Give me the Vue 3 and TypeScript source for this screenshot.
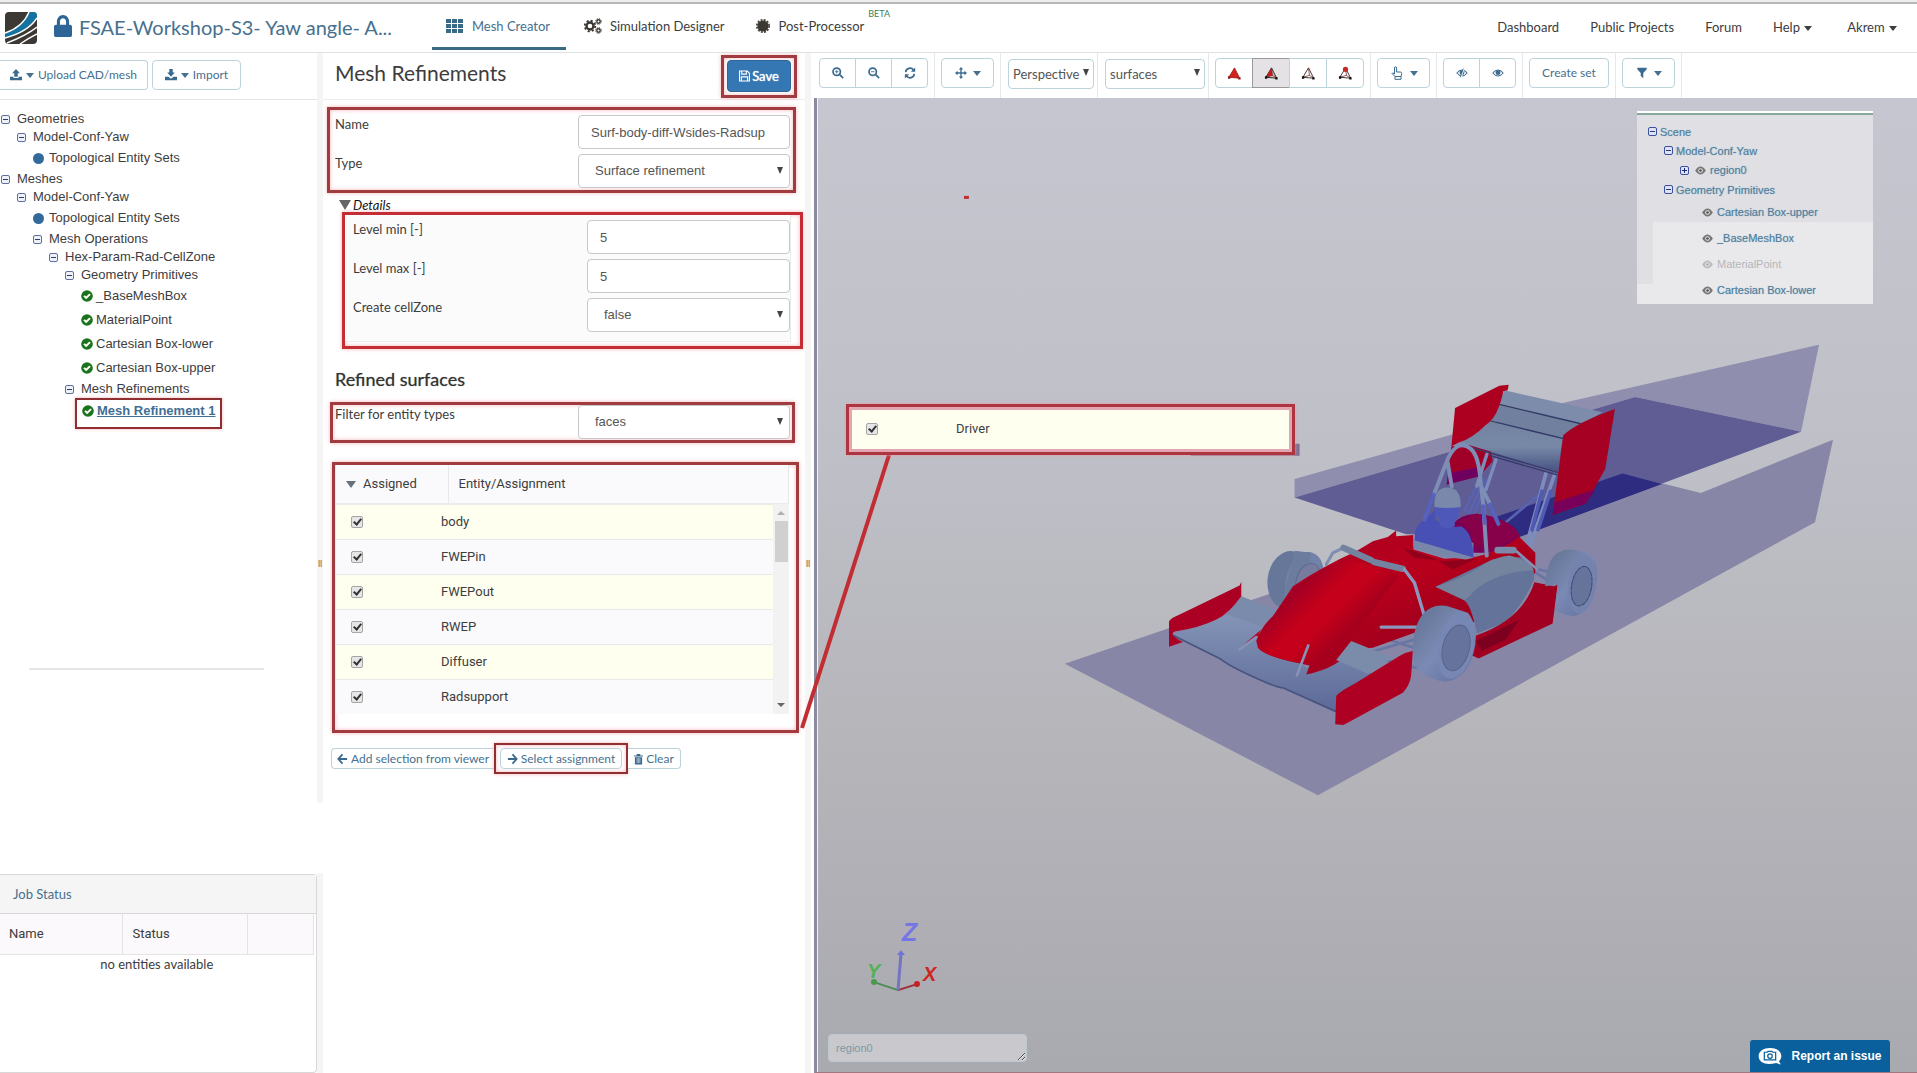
<script setup lang="ts">
import { ref } from 'vue'

type NodeKind = 'folder' | 'set' | 'ok' | 'active'
interface TreeNode { label: string; depth: number; kind: NodeKind }
interface SceneNode { label: string; depth: number; kind: 'open' | 'closed' | 'leaf'; dim?: boolean }

const tree: TreeNode[] = [
  { label: 'Geometries', depth: 0, kind: 'folder' },
  { label: 'Model-Conf-Yaw', depth: 1, kind: 'folder' },
  { label: 'Topological Entity Sets', depth: 2, kind: 'set' },
  { label: 'Meshes', depth: 0, kind: 'folder' },
  { label: 'Model-Conf-Yaw', depth: 1, kind: 'folder' },
  { label: 'Topological Entity Sets', depth: 2, kind: 'set' },
  { label: 'Mesh Operations', depth: 2, kind: 'folder' },
  { label: 'Hex-Param-Rad-CellZone', depth: 3, kind: 'folder' },
  { label: 'Geometry Primitives', depth: 4, kind: 'folder' },
  { label: '_BaseMeshBox', depth: 5, kind: 'ok' },
  { label: 'MaterialPoint', depth: 5, kind: 'ok' },
  { label: 'Cartesian Box-lower', depth: 5, kind: 'ok' },
  { label: 'Cartesian Box-upper', depth: 5, kind: 'ok' },
  { label: 'Mesh Refinements', depth: 4, kind: 'folder' },
  { label: 'Mesh Refinement 1', depth: 5, kind: 'active' },
]

const scene: SceneNode[] = [
  { label: 'Scene', depth: 0, kind: 'open' },
  { label: 'Model-Conf-Yaw', depth: 1, kind: 'open' },
  { label: 'region0', depth: 2, kind: 'closed' },
  { label: 'Geometry Primitives', depth: 1, kind: 'open' },
  { label: 'Cartesian Box-upper', depth: 3, kind: 'leaf' },
  { label: '_BaseMeshBox', depth: 3, kind: 'leaf' },
  { label: 'MaterialPoint', depth: 3, kind: 'leaf', dim: true },
  { label: 'Cartesian Box-lower', depth: 3, kind: 'leaf' },
]

const entities = ref(['body', 'FWEPin', 'FWEPout', 'RWEP', 'Diffuser', 'Radsupport'].map(name => ({ name, on: true })))
const driverOn = ref(true)
const name = ref('Surf-body-diff-Wsides-Radsup')
const levelMin = ref('5')
const levelMax = ref('5')
const region = ref('region0')
const renderModes = ['solid', 'edged', 'wire', 'points']
const activeMode = ref('edged')
</script>

<template>
  <div class="page">
    <header class="topbar">
      <svg class="logo" viewBox="0 0 32 32">
        <rect width="32" height="32" rx="4" fill="#3c3834" />
        <path d="M24 0h4q4 0 4 4v2Q23 20 0 26v-5Q18 15 24 0Z" fill="#15719f" />
        <path d="M24 0Q18 15 0 21M32 6Q23 20 0 26M32 15Q22 23 2 31M32 22Q24 26 15 32" fill="none" stroke="#fff" stroke-width="1.4" />
      </svg>
      <svg class="lock" viewBox="0 0 448 512" preserveAspectRatio="none"><path fill="#2e6596" d="M400 224h-24v-72C376 68 308 0 224 0S72 68 72 152v72H48c-26 0-48 22-48 48v192c0 26 22 48 48 48h352c26 0 48-22 48-48V272c0-26-22-48-48-48zM300 224H148v-72c0-40 34-76 76-76s76 36 76 76v72z" /></svg>
      <h1 class="project">FSAE-Workshop-S3- Yaw angle- A...</h1>
      <nav class="tabs">
        <a href="#mesh" class="tab current">
          <svg class="tab-icon" viewBox="0 0 18 14"><path fill="#3b6a87" d="M0 0h5v4H0zM6 0h5v4H6zM12 0h5v4h-5zM0 5h5v4H0zM6 5h5v4H6zM12 5h5v4h-5zM0 10h5v4H0zM6 10h5v4H6zM12 10h5v4h-5z" /></svg>
          Mesh Creator
        </a>
        <a href="#simulation" class="tab">
          <svg class="tab-icon" viewBox="0 0 18 16" fill="none" stroke="#3b3733">
            <circle cx="6" cy="8" r="3.5" stroke-width="2.4" /><circle cx="6" cy="8" r="5.3" stroke-width="1.8" stroke-dasharray="2.1 2.06" />
            <circle cx="14.5" cy="3.5" r="1.7" stroke-width="1.4" /><circle cx="14.5" cy="3.5" r="2.8" stroke-dasharray="1.2 1" />
            <circle cx="14.5" cy="12.5" r="1.7" stroke-width="1.4" /><circle cx="14.5" cy="12.5" r="2.8" stroke-dasharray="1.2 1" />
          </svg>
          Simulation Designer
        </a>
        <a href="#post" class="tab">
          <svg class="tab-icon small" viewBox="0 0 14 14"><circle cx="7" cy="7" r="5.6" fill="#3b3733" /><circle cx="7" cy="7" r="6.2" fill="none" stroke="#3b3733" stroke-width="1.6" stroke-dasharray="1.9 1.35" /></svg>
          Post-Processor<sup class="beta">BETA</sup>
        </a>
      </nav>
      <nav class="links">
        <a href="#dashboard">Dashboard</a>
        <a href="#projects">Public Projects</a>
        <a href="#forum">Forum</a>
        <a href="#help">Help <i class="caret"></i></a>
        <a href="#user">Akrem <i class="caret"></i></a>
      </nav>
    </header>

    <div class="workspace">
      <aside class="sidebar">
        <div class="side-tools">
          <button type="button" class="btn upload">
            <svg class="ico" viewBox="0 0 14 14"><path d="M7 0l4.500 5H9v4H5V5H2.500zM0 9h4v1.500h6V9h4v4H0z" /></svg><i class="caret"></i>Upload CAD/mesh
          </button>
          <button type="button" class="btn">
            <svg class="ico" viewBox="0 0 14 14"><path d="M5 0h4v4h2.500L7 9 2.500 4H5zM0 9h4l3 2.500L10 9h4v4H0z" /></svg><i class="caret"></i>Import
          </button>
        </div>
        <ul class="tree">
          <li v-for="(n, i) in tree" :key="i" :class="[n.kind, 'd' + n.depth]">
            <span v-if="n.kind === 'folder'" class="toggle"></span>
            <span v-else-if="n.kind === 'set'" class="dot"></span>
            <svg v-else class="ok-icon" viewBox="0 0 512 512"><circle cx="256" cy="256" r="248" fill="#1b741b" /><path d="M130 250l90 90 165-165" fill="none" stroke="#fff" stroke-width="84" /></svg>
            <a v-if="n.kind === 'active'" href="#refinement">{{ n.label }}</a>
            <span v-else>{{ n.label }}</span>
          </li>
        </ul>
        <hr class="rule">
        <section class="jobs">
          <h2>Job Status</h2>
          <table>
            <thead><tr><th class="c1">Name</th><th class="c2">Status</th><th></th></tr></thead>
            <tbody><tr><td colspan="3">no entities available</td></tr></tbody>
          </table>
        </section>
      </aside>

      <div class="gutter split"><span class="grip">||</span></div>

      <main class="editor">
        <div class="editor-head">
          <h2>Mesh Refinements</h2>
          <div class="mark save-mark">
            <button type="button" class="save">
              <svg viewBox="0 0 12 12"><path d="M.6.6H9l2.400 2.400v8.400H.6zM3 .6V4h5V.6M2.600 11.400V7h6.800v4.400" fill="none" stroke="#fff" stroke-width="1.2" /></svg>Save
            </button>
          </div>
        </div>

        <div class="mark basics">
          <div class="field"><label for="f-name">Name</label><input id="f-name" v-model="name" type="text"></div>
          <div class="field"><label for="f-type">Type</label><span class="pick"><select id="f-type"><option>Surface refinement</option></select></span></div>
        </div>

        <div class="details-title"><i class="down"></i><em>Details</em></div>
        <div class="mark details">
          <div class="details-box">
            <div class="field"><label for="f-min">Level min [-]</label><input id="f-min" v-model="levelMin" type="text"></div>
            <div class="field"><label for="f-max">Level max [-]</label><input id="f-max" v-model="levelMax" type="text"></div>
            <div class="field"><label for="f-zone">Create cellZone</label><span class="pick"><select id="f-zone"><option>false</option></select></span></div>
          </div>
        </div>

        <h3>Refined surfaces</h3>
        <div class="mark filter">
          <div class="field"><label for="f-filter">Filter for entity types</label><span class="pick"><select id="f-filter"><option>faces</option></select></span></div>
        </div>

        <div class="mark assign">
          <table>
            <thead><tr><th class="a1"><i class="sort"></i>Assigned</th><th>Entity/Assignment</th></tr></thead>
            <tbody>
              <tr v-for="(e, i) in entities" :key="e.name">
                <td class="a1"><input :id="'e' + i" v-model="e.on" type="checkbox"></td>
                <td><label :for="'e' + i">{{ e.name }}</label></td>
              </tr>
            </tbody>
          </table>
          <div class="scroll"><i class="up"></i><span class="thumb"></span><i class="dn"></i></div>
        </div>

        <div class="actions">
          <button type="button" class="btn mini first"><svg class="ico" viewBox="0 0 12 12"><path d="M6 1L1.500 6 6 11M2 6h9" class="line" /></svg>Add selection from viewer</button>
          <div class="mark pick-mark"><button type="button" class="btn mini"><svg class="ico" viewBox="0 0 12 12"><path d="M6 1l4.500 5L6 11M10 6H1" class="line" /></svg>Select assignment</button></div>
          <button type="button" class="btn mini last"><svg class="ico slim" viewBox="0 0 10 12"><path d="M0 2h3V.5h4V2h3v1.200H0zM1 4h8v8H1z" /><path d="M3.500 5v5.500M5 5v5.500M6.500 5v5.500" stroke="#fff" stroke-width=".6" /></svg>Clear</button>
        </div>
      </main>

      <div class="gutter"><span class="grip">||</span></div>

      <section class="viewer">
        <div class="viewer-tools">
          <div class="cell"><div class="group">
            <button type="button" class="btn sq" aria-label="Zoom in"><svg class="ico" viewBox="0 0 14 14"><circle cx="5.5" cy="5.5" r="4.3" class="line" /><path d="M9 9l4 4" class="line" /><path d="M3.500 5.500h4M5.500 3.500v4" class="line thin" /></svg></button>
            <button type="button" class="btn sq" aria-label="Zoom out"><svg class="ico" viewBox="0 0 14 14"><circle cx="5.5" cy="5.5" r="4.3" class="line" /><path d="M9 9l4 4" class="line" /><path d="M3.500 5.500h4" class="line thin" /></svg></button>
            <button type="button" class="btn sq" aria-label="Reset view"><svg class="ico" viewBox="0 0 14 14"><path d="M2 6a5 5 0 0 1 9-2.500M12 8a5 5 0 0 1-9 2.500" class="line" /><path d="M13 .5v5H8zM1 13.500v-5h5z" /></svg></button>
          </div></div>
          <div class="cell"><button type="button" class="btn w-move" aria-label="Move"><svg class="ico" viewBox="0 0 14 14"><path d="M7 0l2.500 3H7.800v3.200H11V4.500L14 7l-3 2.500V7.800H7.800V11h1.700L7 14l-2.500-3h1.700V7.800H3v1.700L0 7l3-2.500v1.700h3.200V3H4.500z" /></svg><i class="caret"></i></button></div>
          <div class="cell tight"><span class="pick w-view"><select aria-label="Projection"><option>Perspective</option></select></span></div>
          <div class="cell tight"><span class="pick w-surf"><select aria-label="Entity type"><option>surfaces</option></select></span></div>
          <div class="cell"><div class="group modes">
            <button v-for="m in renderModes" :key="m" type="button" class="btn sq" :class="{ pressed: m === activeMode }" :aria-label="m" @click="activeMode = m">
              <svg class="tri" viewBox="0 0 16 16">
                <path v-if="m === 'solid'" d="M8 2l5.500 11L2 12z" fill="#d3201c" stroke="#a5211d" />
                <path v-else-if="m === 'edged'" d="M8 2l5.500 11L2 12z" fill="#e3c3c2" stroke="#222" />
                <path v-else d="M8 2l5.500 11L2 12z" fill="#fff" stroke="#333" />
                <path v-if="m === 'edged'" d="M8 2L9 10 2 12z" fill="#c11f1b" />
                <path v-if="m !== 'solid'" d="M8 2L9 10l4.500 3M9 10l-7 2" fill="none" stroke="#7a2420" stroke-width=".8" />
                <path d="M1 11h2.500v2.500H1zM12 12h2.500v2.500H12z" :fill="m === 'solid' ? '#8d1c18' : '#111'" />
                <circle v-if="m === 'points'" cx="8" cy="3.5" r="2.8" fill="#c62a26" />
              </svg>
            </button>
          </div></div>
          <div class="cell"><button type="button" class="btn w-pick" aria-label="Pick"><svg class="ico hand" viewBox="0 0 14 14"><path d="M4.500 8V2q0-1.300 1-1.300T6.600 2v4h3.700q1.400 0 1.400 1.500L11 10.500H5L2 7.500q0-1.500 2.500.5ZM5 10.500h6v2.800H5z" fill="none" stroke="#3b6a8f" /></svg><i class="caret"></i></button></div>
          <div class="cell"><div class="group">
            <button type="button" class="btn sq" aria-label="Hide"><svg class="ico" viewBox="0 0 14 14"><path d="M1 7q6-7 12 0-6 7-12 0Z" fill="none" stroke="#3b6a8f" stroke-width="1.2" /><circle cx="7" cy="6.6" r="2.8" /><path d="M9.500 1.500l-4 11" stroke="#fff" stroke-width="1.5" /><path d="M8.500 2l-3.500 10" class="line thin" /></svg></button>
            <button type="button" class="btn sq" aria-label="Show"><svg class="ico" viewBox="0 0 14 14"><path d="M1 7q6-7 12 0-6 7-12 0Z" fill="none" stroke="#3b6a8f" stroke-width="1.2" /><circle cx="7" cy="6.6" r="2.8" /></svg></button>
          </div></div>
          <div class="cell"><button type="button" class="btn w-create">Create set</button></div>
          <div class="cell"><button type="button" class="btn w-filter" aria-label="Filter"><svg class="ico" viewBox="0 0 14 14"><path d="M1.500 1h11v1.500L8.500 7v6L5.500 10.500V7l-4-4.500z" /></svg><i class="caret"></i></button></div>
        </div>

        <div class="canvas">
          <svg class="model" viewBox="818 98 1099 975" preserveAspectRatio="xMidYMin meet">
            <defs>
              <linearGradient id="red" x1="0" y1="0" x2="1" y2="1"><stop offset="0" stop-color="#a80026" /><stop offset=".45" stop-color="#b8001c" /><stop offset=".6" stop-color="#a6001d" /><stop offset="1" stop-color="#96001f" /></linearGradient>
              <linearGradient id="nose" gradientUnits="userSpaceOnUse" x1="760" y1="760" x2="900" y2="900"><stop offset="0" stop-color="#a20024" /><stop offset=".4" stop-color="#c4001a" /><stop offset=".65" stop-color="#c4001a" /><stop offset="1" stop-color="#a6001d" /></linearGradient>
              <linearGradient id="steel" x1="0" y1="0" x2="0" y2="1"><stop offset="0" stop-color="#8494b6" /><stop offset="1" stop-color="#5c6998" /></linearGradient>
              <linearGradient id="wing" x1="0" y1="0" x2="0" y2="1"><stop offset="0" stop-color="#72829f" /><stop offset=".5" stop-color="#7889a8" /><stop offset="1" stop-color="#465382" /></linearGradient>
              <linearGradient id="tyre" x1="0" y1="0" x2="1" y2="1"><stop offset="0" stop-color="#61718f" /><stop offset=".5" stop-color="#7a8ab4" /><stop offset="1" stop-color="#5f6b99" /></linearGradient>
            </defs>
            <rect x="964" y="196" width="5" height="3" fill="#c32d31" />
            <path d="M1191 454L1240 450 1290 449V444H1300V456H1191Z" fill="#7c6f92" />
            <g transform="translate(1040 340) scale(.33333)" stroke-linejoin="round" stroke-linecap="round">
              <path d="M75 973L1750 402 1985 460 2382 300 2328 548 835 1368Z" fill="#8886a6" />
              <path d="M765 418L1580 188 2340 15 2286 276 1788 172 765 474Z" fill="#8f8eae" />
              <path d="M765 474L1788 172 2286 276 1440 592 1100 584Z" fill="#5f5d94" />
              <path d="M1250 573L1750 402 1868 433 1440 592Z" fill="#2e2c80" />
              <g transform="translate(1050 -30)">
                <path d="M186 350L172 465 270 440 310 395 300 340Z" fill="#a00028" />
                <path d="M177 430L270 412 268 440 172 465Z" fill="#700060" />
                <g fill="none" stroke="#5863b4" stroke-width="8">
                  <path d="M275 440L225 545M285 450L240 550M300 440L255 550M455 490L345 582" />
                  <path d="M470 430L408 660M495 437L418 660" stroke="#7c8dbb" stroke-width="11" />
                  <path d="M458 485L428 600M484 485L446 600" stroke="#4f5ab4" stroke-width="11" />
                  <path d="M293 372L262 470M320 390L290 480" stroke="#7c8dbb" stroke-width="10" />
                </g>
                <path d="M210 338Q270 310 300 275L520 328 505 425Z" fill="url(#wing)" />
                <path d="M325 225L578 284 520 325 300 271Z" fill="#71809f" />
                <path d="M345 182L640 248 580 282 327 221Z" fill="#7c8caa" />
                <path d="M325 223L578 283M300 273L520 326M215 345L505 428M300 377L503 436" stroke="#333c67" stroke-width="4" />
                <path d="M197 235L330 168 358 165 355 182 342 185Q325 265 290 285 250 325 210 338L186 350Z" fill="#ad0021" />
                <path d="M522 317Q560 280 677 238L648 418 590 522 490 556Z" fill="#a60022" />
                <path d="M496 518L618 480 590 522 490 556Z" fill="#780058" />
              </g>
              <ellipse cx="748" cy="722" rx="64" ry="88" transform="rotate(8 748 722)" fill="#66779a" />
              <ellipse cx="795" cy="724" rx="56" ry="88" transform="rotate(14 795 724)" fill="#7181a8" />
              <path d="M765 634L815 640 780 810 725 808Z" fill="#6b7c9f" />
              <ellipse cx="805" cy="722" rx="34" ry="52" transform="rotate(20 805 722)" fill="#777c9f" stroke="#5c678d" stroke-width="3" />
              <path d="M605 770L720 815 650 865 562 826Z" fill="#7a8bac" />
              <path d="M395 885Q480 865 562 826L690 870 650 905 800 985 890 960 1000 1003 890 1070V1118L730 1045Q700 1042 640 1012L570 975 540 957Z" fill="url(#steel)" />
              <path d="M395 885L540 957Q565 978 640 1012T730 1045L888 1116" fill="none" stroke="#46547f" stroke-width="5" />
              <path d="M388 845Q395 835 420 825L600 738 605 727V770Q570 820 530 840 480 865 405 876 385 885 430 908L388 922Z" fill="#ab0024" />
              <path d="M1005 935L1125 900M1045 900L1140 930M1030 960L1130 985M1125 840L1180 860M1500 690L1540 700M1490 700L1530 725" stroke="#6876a5" stroke-width="8" />
              <path d="M1240 555Q1270 515 1330 525 1430 545 1440 592L1448 640H1240Z" fill="#7a0055" />
              <path d="M595 932L655 888 700 840 625 905ZM650 905Q655 875 700 830L760 740Q850 680 950 635L1000 605 1045 592 1070 573V590L1122 586V630L1215 658 1310 652Q1380 635 1440 592L1488 640V700L1300 850 1125 880 1000 925 930 930Q900 985 800 1005L810 978Q680 955 655 925Z" fill="url(#red)" />
              <path d="M655 905Q655 875 700 830L765 742Q850 685 920 655L1080 710Q1000 800 900 960L810 975Q680 955 655 925Z" fill="url(#nose)" />
              <path d="M1090 625L1125 655 1215 665 1310 658 1240 690 1180 655Z" fill="#79001a" opacity=".6" />
              <g transform="translate(1050 -30)">
                <path d="M245 645Q255 600 210 575L260 552Q370 570 392 620L300 665Z" fill="#86004a" />
                <path d="M72 628V655L150 680 230 690 252 685V640Z" fill="#7887a9" />
                <path d="M75 632Q72 590 105 570L140 538 138 570Q175 600 215 590 252 610 252 684Z" fill="#4850b5" />
                <path d="M137 520H213Q215 560 196 575V590Q170 602 150 590V570Q130 555 137 520Z" fill="#4e58b8" />
                <path d="M135 532Q132 474 174 474 216 474 214 532 174 538 135 532Z" fill="#7988ab" />
                <g fill="none" stroke="#7d8db6" stroke-width="12">
                  <path d="M135 490L175 388Q205 325 245 358 268 380 273 450L282 530 292 678M175 400L187 470M268 455L300 520" />
                  <path d="M133 495L105 570M281 530L286 580M302 525L327 583" stroke="#5662bb" />
                </g>
                <path d="M138 772L310 690 395 683Q440 700 434 750 400 830 345 880L262 912Q245 820 220 810Z" fill="#64739a" />
                <path d="M138 772Q240 740 290 700 330 680 360 678 420 690 434 722 300 730 240 800L225 812Z" fill="#74839e" />
                <path d="M435 758L495 770 505 765 490 882 268 987 248 978 260 918Q400 870 435 758Z" fill="#a20021" />
                <path d="M260 935L390 870 350 930 275 965Z" fill="#7e001f" />
                <path d="M375 660L442 718" fill="none" stroke="#8391b4" stroke-width="8" />
                <path d="M325 662H372" stroke="#7b8aa8" stroke-width="20" />
                <path d="M468 770Q472 690 505 670 530 655 560 662L605 674Q625 692 623 750 612 850 550 860 520 857 497 840L505 765Z" fill="url(#tyre)" />
                <ellipse cx="578" cy="765" rx="42" ry="88" transform="rotate(8 578 765)" fill="#7483ad" />
                <ellipse cx="577" cy="770" rx="30" ry="60" transform="rotate(10 577 770)" fill="#66749c" stroke="#3c4870" stroke-width="3" stroke-dasharray="12 4" />
              </g>
              <path d="M860 675L880 640 905 628" fill="none" stroke="#7e8db2" stroke-width="9" />
              <path d="M912 625L995 662M1005 668L1090 688" stroke="#73839f" stroke-width="19" />
              <path d="M1095 690L1125 730 1155 830M1025 863H1135" fill="none" stroke="#8b98bd" stroke-width="10" />
              <path d="M600 930L650 893M806 918L772 1008" stroke="#8593b6" stroke-width="8" />
              <path d="M935 905L1060 955 985 1003 890 962Z" fill="#7b8cab" />
              <g transform="translate(1050 -30)">
                <path d="M70 950Q75 860 125 835 145 825 175 830L235 850Q262 880 258 945 240 1050 165 1057 100 1045 75 1005Z" fill="url(#tyre)" />
                <ellipse cx="200" cy="948" rx="54" ry="102" transform="rotate(12 200 948)" fill="#7787b3" />
                <ellipse cx="200" cy="955" rx="40" ry="70" transform="rotate(14 200 955)" fill="#66749d" stroke="#56638c" stroke-width="3" />
              </g>
              <path d="M890 1070Q895 1060 950 1030L1080 950Q1095 940 1120 935L1115 1010Q1110 1040 1090 1060L912 1157 887 1155Z" fill="#ad0022" />
            </g>
            <g fill="none" stroke-width="2">
              <path d="M898 991L874 983" stroke="#4d8c55" /><path d="M898 991L917 985" stroke="#9c2f35" /><path d="M898 991L901 955" stroke="#7474c4" stroke-width="3" />
            </g>
            <circle cx="874" cy="983" r="3" fill="#459a4c" /><circle cx="917" cy="985" r="3" fill="#c42126" /><path d="M901 951l4 5h-8z" fill="#7171de" />
            <g class="axis"><text x="902" y="942" fill="#7675e6" font-size="25">Z</text><text x="867" y="979" fill="#54b155" font-size="20">Y</text><text x="923" y="982" fill="#cd2624" font-size="20">X</text></g>
          </svg>

          <ul class="scene">
            <li v-for="(n, i) in scene" :key="i" :class="[n.kind, 's' + n.depth, { dim: n.dim }]">
              <span v-if="n.kind !== 'leaf'" class="toggle" :class="{ plus: n.kind === 'closed' }"></span>
              <svg v-if="n.kind !== 'open'" class="eye" viewBox="0 0 12 10"><path d="M0 5q6-9 12 0-6 9-12 0Z" fill="#777" /><circle cx="6" cy="5" r="2.6" fill="#e2e2e2" /><circle cx="6" cy="5" r="1.5" fill="#555" /></svg>
              <span>{{ n.label }}</span>
            </li>
          </ul>

          <textarea v-model="region" class="region" aria-label="Selection"></textarea>
          <button type="button" class="report">
            <svg viewBox="0 0 24 18"><path d="M12 0C19 0 24 3.500 24 8.500c0 2.500-1 4-2.500 5.500l2 3.500-5-1.500C8 18.500 0 16 0 8.500 0 3.500 5 0 12 0Z" fill="#fff" /><path d="M6 4.500h3l1-1h4l1 1h3v8H6z" fill="none" stroke="#0a609c" stroke-width="1.3" /><circle cx="12" cy="8.5" r="2.4" fill="none" stroke="#0a609c" stroke-width="1.3" /></svg>
            Report an issue
          </button>
        </div>
      </section>

      <svg class="pointer" viewBox="0 0 96 280"><path d="M4 275L91 2" stroke="#c22d33" stroke-width="4" /></svg>
      <div class="callout">
        <input id="driver" v-model="driverOn" type="checkbox"><label for="driver">Driver</label>
      </div>
    </div>
  </div>
</template>

<style>
body { margin: 0; background: #fff; }
</style>

<style scoped>
* { box-sizing: border-box; }
.page { min-height: 100vh; display: flex; flex-direction: column; border-top: 2px solid #eee; font: 13px/20px Lato, sans-serif; color: #3d3d3d; overflow: hidden; }
a { color: inherit; text-decoration: none; }
h1, h2, h3, ul { margin: 0; padding: 0; font-weight: 400; list-style: none; }
button, input, select, textarea { font: inherit; color: inherit; margin: 0; }
.caret { display: inline-block; border: 4px solid transparent; border-top: 5px solid currentColor; border-bottom: 0; vertical-align: 1px; }

.topbar { display: flex; align-items: center; height: 51px; border-top: 2px solid #b9b9b9; border-bottom: 1px solid #dfe2e2; padding-left: 5px; flex: none; }
.logo { width: 32px; height: 32px; margin-right: 17px; }
.lock { width: 18px; height: 22px; margin: 0 7px 4px 0; }
.project { font-size: 20px; line-height: 28px; color: #46708f; width: 353px; white-space: nowrap; padding-bottom: 3px; }
.tabs { display: flex; align-self: stretch; gap: 4px; }
.tab { display: flex; align-items: center; padding: 0 14px; white-space: nowrap; height: 46px; border-bottom: 3px solid transparent; }
.tab.current { color: #46708f; border-color: #3b6a87; width: 134px; }
.tab-icon { width: 18px; height: 16px; margin-right: 8px; }
.tab-icon.small { width: 14px; height: 14px; }
.beta { font-size: 9px; line-height: 12px; color: #3f7d50; align-self: flex-start; margin: 4px 0 0 4px; }
.links { margin-left: auto; display: flex; gap: 31px; padding: 0 20px 2px 0; white-space: nowrap; }
.links .caret { margin-left: 1px; }
.links a:nth-child(4) { margin-right: 4px; }

.workspace { position: relative; flex: 1; display: grid; grid-template-columns: 317px 6px 482px 6px minmax(0, 1fr); }
.gutter { background: #f5f5f5; display: flex; align-items: center; justify-content: center; }
.gutter.split { background: linear-gradient(#f5f5f5 750px, #fff 750px, #fff 820px, #f5f5f5 820px); }
.grip { font: 8px/10px "Liberation Sans", sans-serif; color: #333; }

.btn { display: inline-flex; align-items: center; justify-content: center; gap: 5px; height: 30px; background: #fff; border: 1px solid #bcd3dc; border-radius: 4px; color: #46708f; font-size: 12px; line-height: 18px; padding: 0 12px; white-space: nowrap; }
.btn .caret { vertical-align: 0; }
.ico { width: 12px; height: 12px; fill: #3b6a8f; flex: none; }
.ico .line { fill: none; stroke: #3b6a8f; stroke-width: 2; }
.ico .thin { stroke-width: 1; }
.ico.hand { width: 14px; height: 14px; }

.sidebar { display: flex; flex-direction: column; }
.side-tools { display: flex; gap: 4px; height: 47px; padding-top: 7px; border-bottom: 1px solid #e2e6e6; }
.side-tools .btn { gap: 4px; width: 89px; padding: 0; }
.side-tools .upload { border-left: 0; border-radius: 0 4px 4px 0; width: 148px; }
.tree { padding-top: 10px; font: 13px/18px "Liberation Sans", Arial, sans-serif; }
.tree li { display: flex; align-items: center; height: 24px; white-space: nowrap; }
.tree li.folder { height: 18px; }
.toggle { width: 9px; height: 9px; border: 1px solid #5d719b; border-radius: 2px; background: linear-gradient(#2d3e6d, #2d3e6d) center / 5px 1px no-repeat, #eef1f8; flex: none; margin-right: 7px; }
.dot { width: 11px; height: 11px; border-radius: 50%; background: #336a9c; margin-right: 5px; }
.ok-icon { width: 12px; height: 12px; margin-right: 3px; flex: none; }
.d0 { padding-left: 1px; } .d1 { padding-left: 17px; } .d2 { padding-left: 33px; } .d3 { padding-left: 49px; } .d4 { padding-left: 65px; } .d5 { padding-left: 81px; }
.tree li.active { width: 147px; height: 31px; margin-left: 75px; padding: 0 0 6px 5px; border: 2px solid #8f2f31; box-shadow: 0 0 3px #f3b1b1; }
.active .ok-icon { margin-right: 0; }
.active a { font-weight: 700; color: #3f6f94; text-decoration: underline; padding-left: 3px; }
.rule { width: 235px; height: 2px; border: 0; background: #e6e6e6; margin: 239px 0 0 29px; }
.jobs { margin-top: auto; height: 199px; border: 1px solid #d8d8d8; border-left: 0; border-radius: 0 4px 4px 0; }
.jobs h2 { height: 39px; background: #f5f5f5; border-bottom: 1px solid #d8d8d8; font-size: 13px; line-height: 38px; padding-left: 13px; color: #46708f; }
.jobs table { border-collapse: collapse; width: calc(100% - 2px); table-layout: fixed; }
.jobs th { height: 40px; text-align: left; font: 13px/20px Roboto, sans-serif; background: #fbf9fb; border-right: 1px solid #e4e4e4; border-bottom: 1px solid #e4e4e4; padding: 0 10px; }
.jobs .c1 { width: 122px; padding-left: 9px; } .jobs .c2 { width: 125px; }
.jobs td { text-align: center; padding: 0; line-height: 18px; }

.mark { border: 3px solid #a03b40; box-shadow: 0 0 4px #f5b5b8, inset 0 0 4px #f5b5b8; }
.editor { display: flex; flex-direction: column; }
.editor-head { display: flex; justify-content: space-between; height: 47px; padding: 2px 8px 0 12px; border-bottom: 1px solid #ececec; }
.editor-head h2 { font-size: 21px; line-height: 36px; }
.save-mark { width: 76px; height: 43px; padding: 2px 3px; }
.save { width: 64px; height: 32px; display: flex; align-items: center; justify-content: center; gap: 2px; background: #3577b3; border: 1px solid #2d659a; border-radius: 4px; color: #fff; font-size: 13px; line-height: 18px; padding: 0; text-shadow: 0 0 1px #fff; }
.save svg { width: 11px; height: 12px; }
.field { display: flex; justify-content: space-between; height: 34px; }
.field label { font-size: 13px; line-height: 18px; }
.field input, .field .pick { width: 212px; height: 34px; }
.field input, select { border: 1px solid #c8c8c8; border-radius: 4px; background: #fff; font: 13px/18px "Liberation Sans", Arial, sans-serif; color: #555; padding: 0 12px; }
.pick { position: relative; display: block; }
.pick::after { content: ""; position: absolute; right: 7px; top: 13px; border: 3px solid transparent; border-top: 7px solid #444; border-bottom: 0; }
select { appearance: none; width: 100%; height: 100%; padding: 0 16px; }
.basics { margin: 7px 9px 0 4px; height: 86px; padding: 5px 3px 0 5px; display: grid; gap: 5px; align-content: start; }
.details-title { display: flex; align-items: center; gap: 2px; height: 19px; padding: 4px 0 0 16px; line-height: 16px; font-size: 13px; color: #111; }
.down { border: 6px solid transparent; border-top: 10px solid #666; border-bottom: 0; }
.details { border-color: #c32d33; margin: 0 2px 0 19px; height: 137px; padding-right: 9px; }
.details-box { height: 127px; background: #fbfbfb; border: solid #ececec; border-width: 0 1px 1px 0; display: grid; gap: 5px; align-content: start; padding: 5px 0 0 8px; }
.details-box .field input, .details-box .pick { width: 203px; }
h3 { font-size: 18px; line-height: 24px; padding-left: 12px; margin: 18px 0 11px; color: #333; text-shadow: 0 0 1px #888; }
.filter { margin: 0 10px 0 7px; height: 41px; padding: 0 2px; }
.assign { position: relative; margin: 19px 6px 0 9px; height: 271px; padding: 0 7px 0 1px; font: 13px/18px Roboto, sans-serif; }
.assign table { width: 100%; border-collapse: collapse; }
.assign th { height: 39px; text-align: left; font-weight: 400; background: #faf9fb; border-bottom: 2px solid #ebebeb; border-right: 1px solid #e8e8e8; padding: 0 10px; }
.assign th.a1 { width: 112px; }
.assign td { height: 35px; border-bottom: 1px solid #e9e9ec; padding: 0 0 0 2px; background: #faf9fb; }
.assign tr:nth-child(odd) td { background: #fffff0; }
.assign td.a1 { padding-left: 15px; }
.assign tr:last-child td { border-bottom: 0; }
.assign td label { display: inline-block; margin-left: -9px; }
.sort { display: inline-block; border: 5px solid transparent; border-top: 7px solid #66707c; border-bottom: 0; margin-right: 7px; }
input[type=checkbox] { appearance: none; position: relative; display: block; width: 12px; height: 12px; border: 1px solid #a5a5a5; border-radius: 2px; background: #e6e6e6; }
input[type=checkbox]:checked::after { content: ""; position: absolute; left: 3px; top: 0; width: 3px; height: 6px; border: solid #333; border-width: 0 2px 2px 0; transform: rotate(40deg); }
.scroll { position: absolute; right: 7px; top: 39px; width: 16px; height: 210px; background: #f2f2f2; display: flex; flex-direction: column; align-items: center; padding: 7px 0; }
.up { border: 4px solid transparent; border-bottom: 4px solid #b0b0b0; border-top: 0; }
.dn { border: 4px solid transparent; border-top: 4px solid #666; border-bottom: 0; margin-top: auto; }
.thumb { width: 13px; height: 41px; background: #d0d0d0; margin-top: 6px; }
.actions { display: flex; align-items: center; margin: 10px 0 0 8px; }
.mini { height: 21px; padding: 0 5px; gap: 3px; line-height: 18px; }
.mini .ico { width: 11px; height: 12px; }
.mini .slim { width: 9px; }
.mini.first { width: 163px; border-right: 0; border-radius: 4px 0 0 4px; }
.mini.last { width: 53px; border-left: 0; border-radius: 0 4px 4px 0; }
.pick-mark { border-width: 2px; border-color: #8f2f31; width: 134px; height: 31px; display: flex; align-items: center; justify-content: center; }
.pick-mark .btn { width: 122px; }

.viewer { display: flex; flex-direction: column; padding-left: 3px; min-width: 0; }
.viewer-tools { display: flex; height: 45px; }
.cell { padding: 5px 6px 0 6px; border-right: 1px solid #e6e9ea; }
.cell:first-child { padding-left: 5px; }
.cell.tight { padding: 6px 3px 0 7px; }
.group { display: flex; }
.group .btn { width: 37px; padding: 0; border-radius: 0; margin-right: -1px; }
.group.modes .btn { width: 38px; }
.group .btn:first-child { border-radius: 4px 0 0 4px; }
.group .btn:last-child { border-radius: 0 4px 4px 0; margin-right: 0; }
.btn.pressed { background: #e4e2e5; border-color: #9a9a9a; }
.tri { width: 15px; height: 15px; }
.w-move, .w-pick, .w-filter { width: 53px; padding: 0; gap: 6px; }
.w-create { width: 80px; padding: 0; }
.w-view, .w-surf { width: 86px; height: 30px; }
.w-surf { width: 100px; }
.viewer-tools select { font: 13px/18px Lato, sans-serif; border-color: #bcd3dc; padding: 0 4px; }
.viewer-tools .pick::after { top: 10px; right: 5px; border-width: 7px 3px 0; }
.canvas { position: relative; flex: 1; border-left: 3px solid #8b8b9f; border-bottom: 1px solid #a3777f; background: linear-gradient(#c6c6d0, #bebfc6 40%, #b5b5ba 66%, #a9a9b0); box-shadow: inset 1px 0 #f3f3f6; }
.model { position: absolute; inset: 0; width: 100%; height: 100%; }
.axis { font-family: "Liberation Sans", sans-serif; font-weight: 700; font-style: italic; }
.scene { position: absolute; right: 44px; top: 13px; width: 236px; height: 193px; border-top: 2px solid #fff; padding-top: 9px; background: linear-gradient(#8aa79b, #8aa79b) 0 0 / 100% 2px no-repeat, linear-gradient(#e9e9ec, #e9e9ec) 16px 109px / 100% 100% no-repeat, linear-gradient(#e9e9ec, #e9e9ec) 0 171px / 100% 100% no-repeat, #dfdfe4; font: 11px/16px "Liberation Sans", Arial, sans-serif; color: #50809d; text-shadow: 0 0 1px #8fb0c4; }
.scene li { display: flex; align-items: center; height: 19px; white-space: nowrap; }
.scene li.closed { height: 20px; }
.scene li.leaf { height: 26px; }
.scene .toggle { margin-right: 3px; border-color: #3c4ea0; background-color: #dfe3f8; }
.scene .plus { margin-right: 6px; background: linear-gradient(#1d2b7d, #1d2b7d) center / 5px 1px no-repeat, linear-gradient(#1d2b7d, #1d2b7d) center / 1px 5px no-repeat, #dfe3f8; }
.eye { width: 11px; height: 9px; margin-right: 4px; }
.s0 { padding-left: 11px; } .s1 { padding-left: 27px; } .s2 { padding-left: 43px; } .s3 { padding-left: 65px; }
.dim { color: #b5b5b8; text-shadow: none; } .dim .eye { opacity: .4; }
.region { position: absolute; left: 11px; bottom: 10px; width: 199px; height: 28px; border: 1px solid #bccad0; border-radius: 4px; background: #c8c8cd; font: 11px/14px "Liberation Sans", Arial, sans-serif; color: #7e99a6; padding: 6px 7px; overflow: hidden; }
.report { position: absolute; right: 27px; bottom: 0; width: 140px; height: 32px; display: flex; align-items: center; justify-content: center; gap: 9px; padding: 0; border: 0; border-radius: 3px 3px 0 0; background: #0a609c; color: #fff; font: 700 12px/16px "Liberation Sans", Arial, sans-serif; white-space: nowrap; }
.report svg { width: 24px; height: 17px; }
.pointer { position: absolute; left: 798px; top: 400px; width: 96px; height: 280px; }
.callout { position: absolute; left: 846px; top: 351px; width: 449px; height: 51px; display: flex; align-items: center; border: 3px solid #ad3540; box-shadow: 0 0 3px #e99aa6, inset 0 0 0 3px #e3a5b1; background: #fffff0; padding: 0 0 2px 17px; font: 13px/18px Roboto, sans-serif; }
.callout label { margin-left: 78px; }
</style>
